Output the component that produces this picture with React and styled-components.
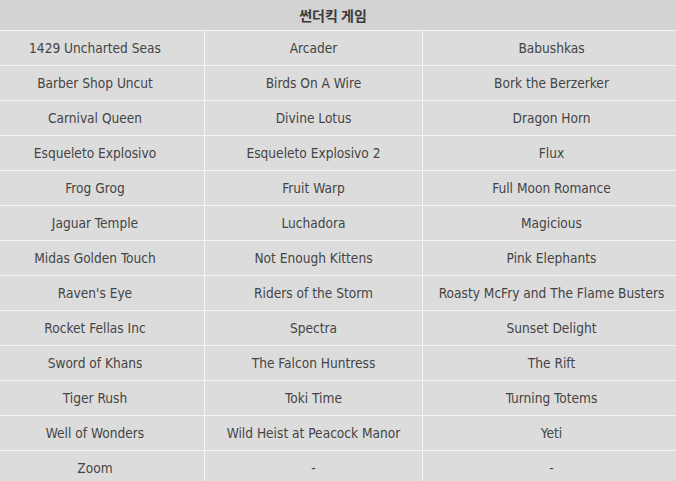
import React from "react";
import styled, { createGlobalStyle } from "styled-components";

const Global = createGlobalStyle`
  html, body { margin: 0; padding: 0; background: #ffffff; overflow: hidden; }
  body { font-family: "DejaVu Sans Condensed", "DejaVu Sans", "Noto Sans CJK KR", sans-serif; }
`;

const Table = styled.div`
  display: grid;
  grid-template-columns: 218px 217px 257px;
  gap: 1px;
  background: #f4f4f4;
  width: 694px;
  margin-left: -14px;
`;

const Header = styled.div`
  grid-column: 1 / -1;
  height: 30px;
  display: flex;
  align-items: center;
  justify-content: center;
  background: #d3d3d3;
  color: #3a3a3a;
  font-family: "Noto Sans CJK KR", sans-serif;
  font-weight: 700;
  font-size: 14px;
`;

const Cell = styled.div`
  height: 34px;
  display: flex;
  align-items: center;
  justify-content: center;
  background: #dcdcdc;
  color: #444;
  font-size: 13.6px;
  white-space: nowrap;
`;

const games = [
  "1429 Uncharted Seas", "Arcader", "Babushkas",
  "Barber Shop Uncut", "Birds On A Wire", "Bork the Berzerker",
  "Carnival Queen", "Divine Lotus", "Dragon Horn",
  "Esqueleto Explosivo", "Esqueleto Explosivo 2", "Flux",
  "Frog Grog", "Fruit Warp", "Full Moon Romance",
  "Jaguar Temple", "Luchadora", "Magicious",
  "Midas Golden Touch", "Not Enough Kittens", "Pink Elephants",
  "Raven's Eye", "Riders of the Storm", "Roasty McFry and The Flame Busters",
  "Rocket Fellas Inc", "Spectra", "Sunset Delight",
  "Sword of Khans", "The Falcon Huntress", "The Rift",
  "Tiger Rush", "Toki Time", "Turning Totems",
  "Well of Wonders", "Wild Heist at Peacock Manor", "Yeti",
  "Zoom", "-", "-",
];

export default function App() {
  return (
    <>
      <Global />
      <Table>
        <Header>썬더킥 게임</Header>
        {games.map((g, i) => (
          <Cell key={i}>{g}</Cell>
        ))}
      </Table>
    </>
  );
}
